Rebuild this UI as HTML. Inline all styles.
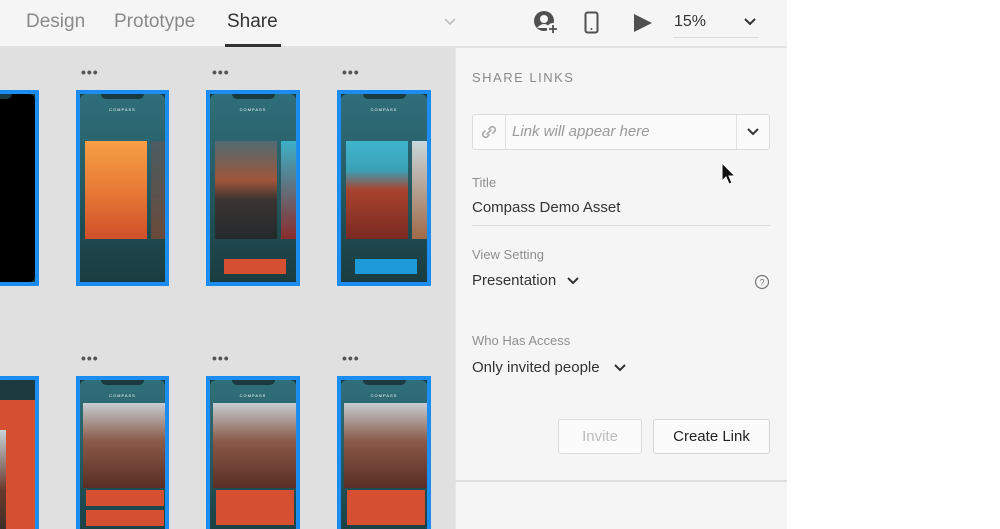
<!DOCTYPE html>
<html><head><meta charset="utf-8"><style>
*{margin:0;padding:0;box-sizing:border-box}
html,body{width:1000px;height:529px;overflow:hidden;background:#fff}
body{font-family:"Liberation Sans",sans-serif}
#root{position:relative;width:1000px;height:529px;overflow:hidden}
.a{position:absolute}
#top{left:0;top:0;width:787px;height:48px;background:#f5f5f5;border-bottom:2px solid #e3e3e3}
.tab{top:11px;font-size:19px;color:#8a8a8a}
#canvas{left:0;top:48px;width:455px;height:481px;background:#e0e0e0;overflow:hidden}
#panel{left:455px;top:48px;width:332px;height:481px;background:#f5f5f5;border-left:1px solid #e6e6e6}
.dots{font-size:14px;color:#555;letter-spacing:1px;font-weight:bold}
.ph{border:2px solid #1a8cf0;background:#1a3a40;padding:2px;box-shadow:inset 0 0 0 2px #1c8ef2}
.ph .in{width:100%;height:100%;border-radius:6px;background:linear-gradient(#2f6f7a,#285e68 40%,#1e4a50 75%,#1a3c40);position:relative;overflow:hidden}
.notch{position:absolute;left:50%;top:0;width:50%;margin-left:-25%;height:5px;background:#1a3a40;border-radius:0 0 5px 5px}
.ct{position:absolute;top:13px;left:0;width:100%;text-align:center;font-size:4px;color:#fff;letter-spacing:1px}
.card{position:absolute;left:5px;top:47px;width:62px;height:98px}
.side{position:absolute;left:71px;top:47px;width:20px;height:98px}
.lbl{font-size:13px;color:#8f8f8f}
.val{font-size:15px;color:#333}
.btn{height:35px;border:1px solid #ddd;border-radius:3px;background:#fbfbfb;font-size:15px;text-align:center;line-height:33px}
.dark .in{background:linear-gradient(#183038,#1c3a40)}
</style></head><body><div id="root">
<div id="top" class="a"></div>
<div class="a tab" style="left:26px">Design</div>
<div class="a tab" style="left:114px">Prototype</div>
<div class="a tab" style="left:227px;color:#333">Share</div>
<div class="a" style="left:225px;top:44px;width:56px;height:3px;background:#333"></div>
<svg class="a" style="left:443px;top:17px" width="14" height="10"><path d="M2 2l5 5 5-5" stroke="#bbb" stroke-width="1.5" fill="none"/></svg>
<svg class="a" style="left:533px;top:10px" width="28" height="26"><circle cx="11" cy="11" r="10" fill="#505050"/><circle cx="11" cy="9" r="4" fill="#f5f5f5"/><path d="M4 18q7-8 14 0" fill="#f5f5f5"/><circle cx="20" cy="19" r="6" fill="#f5f5f5"/><path d="M20 15v8M16 19h8" stroke="#505050" stroke-width="1.8"/></svg>
<svg class="a" style="left:584px;top:11px" width="16" height="24"><rect x="1.5" y="1.5" width="12" height="20" rx="2" fill="none" stroke="#505050" stroke-width="2"/><circle cx="7.5" cy="18" r="1" fill="#505050"/></svg>
<svg class="a" style="left:632px;top:12px" width="22" height="22"><path d="M2 2L20 11 2 20z" fill="#505050"/></svg>
<div class="a" style="left:674px;top:13px;font-size:16px;color:#333">15%</div>
<div class="a" style="left:673px;top:37px;width:86px;height:1px;background:#ddd"></div>
<svg class="a" style="left:743px;top:17px" width="14" height="10"><path d="M2 2l5 5 5-5" stroke="#333" stroke-width="2" fill="none"/></svg>

<div id="canvas" class="a">
<div class="a dots" style="left:81px;top:16px">•••</div>
<div class="a dots" style="left:212px;top:16px">•••</div>
<div class="a dots" style="left:342px;top:16px">•••</div>
<div class="a dots" style="left:81px;top:302px">•••</div>
<div class="a dots" style="left:212px;top:302px">•••</div>
<div class="a dots" style="left:342px;top:302px">•••</div>

<div class="a ph" style="left:-60px;top:42px;width:99px;height:196px"><div class="in" style="background:#000"><div class="notch"></div></div></div>
<div class="a ph" style="left:76px;top:42px;width:93px;height:196px"><div class="in"><div class="notch"></div><div class="ct">COMPASS</div>
<div class="card" style="background:linear-gradient(#f5a044,#e87a35 50%,#cf4f2a)"></div><div class="side" style="background:linear-gradient(#4b5d62,#6a4a3a)"></div></div></div>
<div class="a ph" style="left:206px;top:42px;width:94px;height:196px"><div class="in"><div class="notch"></div><div class="ct">COMPASS</div>
<div class="card" style="background:linear-gradient(#4f6b72,#a0553b 40%,#3a3430 60%,#232a2c)"></div><div class="side" style="background:linear-gradient(#3bb1c8,#8a2c2c)"></div>
<div class="a" style="left:14px;top:165px;width:62px;height:15px;background:#d45030"></div></div></div>
<div class="a ph" style="left:337px;top:42px;width:94px;height:196px"><div class="in"><div class="notch"></div><div class="ct">COMPASS</div>
<div class="card" style="background:linear-gradient(#3fb5cd,#3aa0b5 30%,#a9432e 50%,#7a2a22)"></div><div class="side" style="background:linear-gradient(#c8d8dc,#a06a48)"></div>
<div class="a" style="left:14px;top:165px;width:62px;height:15px;background:#1d9ad8"></div></div></div>

<div class="a ph" style="left:-60px;top:328px;width:99px;height:170px"><div class="in" style="background:linear-gradient(#1c3a40 0,#1c3a40 20px,#d45030 20px)"><div class="notch"></div>
<div class="a" style="left:32px;top:50px;width:30px;height:120px;background:linear-gradient(#c8d3da,#6a3a2c 50%,#2a2a28)"></div></div></div>
<div class="a ph" style="left:76px;top:328px;width:93px;height:170px"><div class="in dark"><div class="notch"></div><div class="ct">COMPASS</div>
<div class="a" style="left:3px;top:23px;width:83px;height:85px;background:linear-gradient(#c5ccd2,#8a5a48 45%,#5a2e26)"></div>
<div class="a" style="left:6px;top:110px;width:78px;height:16px;background:#d45030"></div>
<div class="a" style="left:6px;top:130px;width:78px;height:16px;background:#d45030"></div></div></div>
<div class="a ph" style="left:206px;top:328px;width:94px;height:170px"><div class="in dark"><div class="notch"></div><div class="ct">COMPASS</div>
<div class="a" style="left:3px;top:23px;width:84px;height:85px;background:linear-gradient(#c5ccd2,#8a5a48 45%,#5a2e26)"></div>
<div class="a" style="left:6px;top:110px;width:78px;height:35px;background:#d45030"></div></div></div>
<div class="a ph" style="left:337px;top:328px;width:94px;height:170px"><div class="in dark"><div class="notch"></div><div class="ct">COMPASS</div>
<div class="a" style="left:3px;top:23px;width:84px;height:85px;background:linear-gradient(#c5ccd2,#8a5a48 45%,#5a2e26)"></div>
<div class="a" style="left:6px;top:110px;width:78px;height:35px;background:#d45030"></div></div></div>
</div>

<div id="panel" class="a"></div>
<div class="a" style="left:472px;top:70px;font-size:13px;letter-spacing:1.5px;color:#8a8a8a">SHARE LINKS</div>
<div class="a" style="left:472px;top:114px;width:298px;height:36px;border:1px solid #ddd;border-radius:3px;background:#fafafa"></div>
<div class="a" style="left:505px;top:115px;width:1px;height:34px;background:#e0e0e0"></div>
<div class="a" style="left:736px;top:115px;width:1px;height:34px;background:#e0e0e0"></div>
<svg class="a" style="left:479px;top:122px" width="20" height="20"><path d="M8 12l4-4M6 9l-2 2a3 3 0 004 4l2-2M14 11l2-2a3 3 0 00-4-4l-2 2" stroke="#aaa" stroke-width="1.6" fill="none" stroke-linecap="round"/></svg>
<div class="a" style="left:512px;top:123px;font-size:15px;font-style:italic;color:#999">Link will appear here</div>
<svg class="a" style="left:746px;top:127px" width="14" height="10"><path d="M2 2l5 5 5-5" stroke="#333" stroke-width="2" fill="none"/></svg>
<svg class="a" style="left:720px;top:161px" width="16" height="26"><path d="M2 2v18l4-4 3 7 3-1-3-7h6z" fill="#111" stroke="#fff" stroke-width="1"/></svg>
<div class="a lbl" style="left:472px;top:175px">Title</div>
<div class="a val" style="left:472px;top:199px">Compass Demo Asset</div>
<div class="a" style="left:472px;top:225px;width:298px;height:1px;background:#ddd"></div>
<div class="a lbl" style="left:472px;top:247px">View Setting</div>
<div class="a val" style="left:472px;top:272px">Presentation</div>
<svg class="a" style="left:566px;top:276px" width="14" height="10"><path d="M2 2l5 5 5-5" stroke="#333" stroke-width="2" fill="none"/></svg>
<svg class="a" style="left:754px;top:274px" width="16" height="16"><circle cx="8" cy="8" r="6.5" fill="none" stroke="#777" stroke-width="1.2"/><text x="8" y="11.5" font-size="9" text-anchor="middle" fill="#777" font-family="Liberation Sans">?</text></svg>
<div class="a lbl" style="left:472px;top:333px">Who Has Access</div>
<div class="a val" style="left:472px;top:359px">Only invited people</div>
<svg class="a" style="left:613px;top:363px" width="14" height="10"><path d="M2 2l5 5 5-5" stroke="#333" stroke-width="2" fill="none"/></svg>
<div class="a btn" style="left:558px;top:419px;width:84px;color:#bbb">Invite</div>
<div class="a btn" style="left:653px;top:419px;width:117px;color:#222;border-color:#d6d6d6">Create Link</div>
<div class="a" style="left:455px;top:480px;width:332px;height:2px;background:#ddd"></div>
</div></body></html>
